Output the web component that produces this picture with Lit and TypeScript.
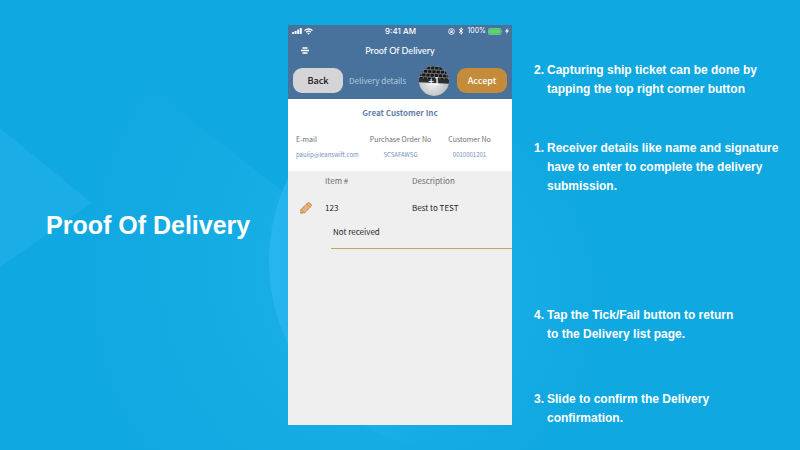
import { LitElement, html, css, svg } from "lit";
import { customElement } from "lit/decorators.js";

const notes = [
  { n: "2.", text: ["Capturing ship ticket can be done by", "tapping the top right corner button"] },
  { n: "1.", text: ["Receiver details like name and signature", "have to enter to complete the delivery", "submission."] },
  { n: "4.", text: ["Tap the Tick/Fail button to return", "to the Delivery list page."] },
  { n: "3.", text: ["Slide to confirm the Delivery", "confirmation."] },
];

const customer = [
  { label: "E-mail", value: "paulip@leanswift.com" },
  { label: "Purchase Order No", value: "SCSAFAWSG" },
  { label: "Customer No", value: "0010001201" },
];

@customElement("status-bar")
class StatusBar extends LitElement {
  static styles = css`
    :host {
      display: grid;
      grid-template-columns: 1fr auto 1fr;
      align-items: center;
      height: 12px;
      padding: 0 3px 0 4px;
      color: #fff;
      font: 500 8px/12px Inter, "Liberation Sans", sans-serif;
    }
    .group { display: flex; align-items: center; gap: 2px; }
    .end { justify-content: flex-end; }
    .charge { font-size: 7px; font-weight: 400; }
    svg { display: block; flex: none; }
  `;
  render() {
    return html`
      <div class="group">
        <svg width="10" height="6" viewBox="0 0 10 6" fill="#fff">
          <rect x="0" y="4" width="2" height="2" rx=".4" />
          <rect x="2.6" y="3" width="2" height="3" rx=".4" />
          <rect x="5.2" y="1.6" width="2" height="4.4" rx=".4" />
          <rect x="7.8" y="0" width="2" height="6" rx=".4" />
        </svg>
        <svg width="9" height="7" viewBox="0 0 9 7" fill="none" stroke="#fff" stroke-width="1.3">
          <path d="M.5 2.6a5.8 5.8 0 0 1 8 0M2.1 4.3a3.5 3.5 0 0 1 4.8 0" />
          <path d="M4.5 6.8 3.2 5.4a1.9 1.9 0 0 1 2.6 0Z" fill="#fff" stroke="none" />
        </svg>
      </div>
      <span>9:41 AM</span>
      <div class="group end">
        <svg width="7" height="7" viewBox="0 0 7 7" fill="none" stroke="#fff" stroke-width=".8">
          <circle cx="3.5" cy="3.5" r="2.9" />
          <rect x="2.3" y="3.2" width="2.4" height="1.7" fill="#fff" stroke="none" />
          <path d="M2.7 3.3v-.7a.8.8 0 0 1 1.6 0v.7" stroke-width=".6" />
        </svg>
        <svg width="8" height="8" viewBox="-1 0 8 8" fill="none" stroke="#fff" stroke-width=".9">
          <path d="M1 2.2 4.8 5.6 3 7.2V.8l1.8 1.6L1 5.8" />
        </svg>
        <span class="charge">100%</span>
        <svg width="15" height="7" viewBox="0 0 15 7">
          <rect x=".4" y=".4" width="12.6" height="6.2" rx="1.4" fill="none" stroke="#a9d8b8" stroke-width=".7" />
          <rect x="1.2" y="1.2" width="11" height="4.6" rx=".8" fill="#4fe260" />
          <path d="M13.8 2.4q1 1.1 0 2.2Z" fill="#a9d8b8" />
        </svg>
        <svg width="4" height="6" viewBox="0 0 4 6" fill="#fff"><path d="M2.6 0 0 3.4h1.7L1.3 6 4 2.5H2.3Z" /></svg>
      </div>
    `;
  }
}

@customElement("ticket-photo")
class TicketPhoto extends LitElement {
  static styles = css`
    :host { display: block; position: relative; width: 30px; height: 30px; }
    svg { display: block; }
    .count {
      position: absolute;
      inset: 0;
      text-align: center;
      color: #fff;
      font: 500 10px/30px "Noto Sans CJK SC", sans-serif;
    }
  `;
  render() {
    const keys = [0, 1, 2, 3].flatMap((r) =>
      [0, 1, 2, 3, 4, 5, 6, 7].map(
        (c) => svg`<rect x=${c * 4.2 - 1 + (r % 2) * 1.6} y=${r * 3.7 + 0.6} width="3.4" height="2.8" rx=".5" fill="#151719" />`
      )
    );
    return html`
      <svg width="30" height="30" viewBox="0 0 30 30">
        <defs>
          <clipPath id="round"><circle cx="15" cy="15" r="15" /></clipPath>
          <radialGradient id="desk" cx=".45" cy=".55" r=".6">
            <stop offset="0" stop-color="#f4f4f4" />
            <stop offset="1" stop-color="#b4b6b8" />
          </radialGradient>
        </defs>
        <g clip-path="url(#round)">
          <rect width="30" height="30" fill="url(#desk)" />
          <g transform="rotate(3 15 8)">
            <rect x="-2" y="-3" width="34" height="19" fill="#74787c" />
            ${keys}
            <rect x="-2" y="13" width="34" height="4" fill="#2b2e31" />
          </g>
        </g>
      </svg>
      <span class="count">+1</span>
    `;
  }
}

@customElement("phone-screen")
class PhoneScreen extends LitElement {
  static styles = css`
    :host {
      display: flex;
      flex-direction: column;
      background: #efefef;
      color: #1d1d1d;
      font: 400 8px/12px "Noto Sans CJK SC", "Noto Sans", sans-serif;
    }
    button { border: 0; margin: 0; padding: 0; font: inherit; cursor: pointer; }
    header { background: #48729b; color: #fff; }
    .title { display: grid; grid-template-columns: 34px 1fr 34px; align-items: center; height: 27px; }
    .menu { display: grid; place-items: center; background: none; height: 20px; }
    h2 { margin: 0; text-align: center; font: 500 9px/12px Lato, sans-serif; }
    .actions { display: flex; align-items: center; gap: 6px; height: 33px; padding: 0 5px 2px; }
    .btn { flex: none; width: 50px; height: 25px; border-radius: 9px; font-size: 9px; font-weight: 500; }
    .back { background: #d5d4d7; color: #111; }
    .accept { background: #c48c3a; color: #fff; }
    .crumb { flex: 1; color: #b5cbdf; white-space: nowrap; }
    ticket-photo { flex: none; margin-right: 2px; }
    .customer { background: #fff; padding: 8px 8px 10px; color: #6e6e6e; }
    h3 { margin: 0 0 14px; text-align: center; color: #5f82ab; font-size: 8px; line-height: 12px; font-weight: 700; }
    dl { display: grid; grid-template-columns: 70px 1fr 69px; margin: 0; font-size: 7px; line-height: 12px; }
    dl div { text-align: center; white-space: nowrap; }
    dl div:first-child { text-align: left; }
    dd { margin: 4px 0 0; color: #7090bc; font-size: 6px; }
    table { width: 100%; border-collapse: collapse; table-layout: fixed; text-align: left; }
    th { height: 20px; padding: 0; color: #6e6e6e; font-weight: 400; }
    td { height: 34px; padding: 0; }
    .pen { width: 37px; }
    .item { width: 87px; }
    .edit { display: grid; place-items: center; width: 36px; height: 16px; background: none; }
    .reason {
      margin-left: 43px;
      padding: 0 2px 9px;
      border: 0;
      border-bottom: 1px solid #c9a06c;
      border-radius: 0;
      outline: 0;
      background: none;
      color: inherit;
      font: inherit;
      line-height: 14px;
    }
  `;
  render() {
    return html`
      <header>
        <status-bar></status-bar>
        <div class="title">
          <button class="menu" aria-label="Menu">
            <svg width="8" height="7" viewBox="0 0 8 7" fill="none" stroke="#fff" stroke-width="1.5">
              <path d="M1.5 1h5M0 3.5h8M1.5 6h5" />
            </svg>
          </button>
          <h2>Proof Of Delivery</h2>
        </div>
        <div class="actions">
          <button class="btn back">Back</button>
          <span class="crumb">Delivery details</span>
          <ticket-photo></ticket-photo>
          <button class="btn accept">Accept</button>
        </div>
      </header>
      <section class="customer">
        <h3>Great Customer Inc</h3>
        <dl>
          ${customer.map((c) => html`<div><dt>${c.label}</dt><dd>${c.value}</dd></div>`)}
        </dl>
      </section>
      <table>
        <thead>
          <tr><th class="pen"></th><th class="item">Item #</th><th>Description</th></tr>
        </thead>
        <tbody>
          <tr>
            <td>
              <button class="edit" aria-label="Edit item">
                <svg width="12" height="12" viewBox="0 0 12 12">
                  <path d="M.8 11.2.9 7.6 7.4 1.2Q8.6.3 9.8 1.2L11 2.4Q11.8 3.4 10.9 4.6L4.6 10.8Z" fill="#e9b27c" stroke="#b8742c" stroke-width="1" stroke-dasharray="1.6 .5" />
                  <path d="M7 2.4 9.6 5M1.6 7.8l2.6 2.6" stroke="#b8742c" stroke-width=".7" stroke-dasharray="1 .6" />
                </svg>
              </button>
            </td>
            <td>123</td>
            <td>Best to TEST</td>
          </tr>
        </tbody>
      </table>
      <input class="reason" aria-label="Reason" value="Not received" />
    `;
  }
}

@customElement("app-root")
class AppRoot extends LitElement {
  static styles = css`
    :host {
      display: grid;
      grid-template-columns: 36fr 28fr 36fr;
      position: relative;
      isolation: isolate;
      box-sizing: border-box;
      min-height: 100vh;
      padding: 25px 0 20px;
      background: #10a8e1;
      color: #fff;
      font: 700 12px/19px "Liberation Sans", Arial, sans-serif;
    }
    .backdrop { position: absolute; inset: 0; z-index: -1; width: 100%; height: 100%; }
    phone-screen { margin-bottom: 5px; }
    h1 { align-self: center; margin: 0 0 5px 46px; font-size: 25px; line-height: 32px; white-space: nowrap; }
    ol {
      display: grid;
      grid-template-rows: 78px 167px 84px auto;
      margin: 0;
      padding: 36px 0 0 22px;
      list-style: none;
    }
    li { display: flex; gap: 3px; white-space: nowrap; }
    .line { display: block; }
  `;
  render() {
    return html`
      <svg class="backdrop" viewBox="0 0 800 450" preserveAspectRatio="xMidYMid slice" aria-hidden="true">
        <defs>
          <radialGradient id="glow" gradientUnits="userSpaceOnUse" cx="400" cy="270" r="320">
            <stop offset="0" stop-color="#20b1ea" />
            <stop offset=".5" stop-color="#16ace4" />
            <stop offset="1" stop-color="#10a8e1" />
          </radialGradient>
          <radialGradient id="halo" gradientUnits="userSpaceOnUse" cx="400" cy="300" r="200">
            <stop offset="0" stop-color="#20b1ea" />
            <stop offset="1" stop-color="#20b1ea" stop-opacity="0" />
          </radialGradient>
          <linearGradient id="disc">
            <stop offset="0" stop-color="#26b5ec" />
            <stop offset=".4" stop-color="#26b5ec" stop-opacity="0" />
          </linearGradient>
        </defs>
        <path d="M112 58 400 283V450H80L76 180Z" fill="url(#glow)" />
        <rect x="400" width="200" height="450" fill="url(#halo)" />
        <path d="M0 128 92 203 0 267Z" fill="#1aade6" />
        <circle cx="459" cy="261" r="190" fill="url(#disc)" />
      </svg>
      <h1>Proof Of Delivery</h1>
      <phone-screen></phone-screen>
      <ol>
        ${notes.map(
          (note) => html`<li><span>${note.n}</span><span>${note.text.map((t) => html`<span class="line">${t}</span>`)}</span></li>`
        )}
      </ol>
    `;
  }
}
